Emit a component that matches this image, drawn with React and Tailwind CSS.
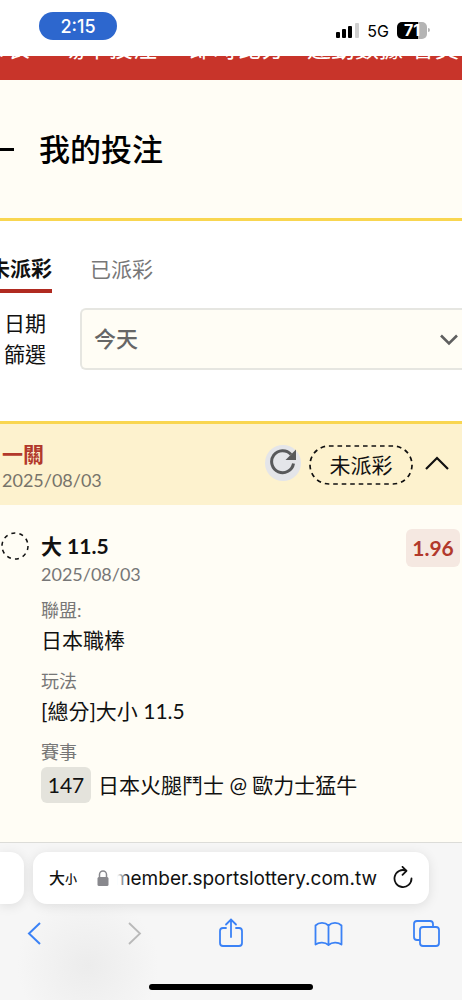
import React from 'react';

const navItems = [
  { label: '賽事表', className: '-ml-[42px]' },
  { label: '場中投注', className: 'ml-[31px]' },
  { label: '即時比分', className: 'ml-8' },
  { label: '運動數據', className: 'ml-[22px]' },
  { label: '會員', className: 'ml-2' },
];

const details = [
  { label: '聯盟:', value: '日本職棒' },
  { label: '玩法', value: '[總分]大小 11.5' },
];

const StatusBar = () => (
  <div className="flex h-14 items-start justify-between bg-white pt-3 pr-8 pl-[39px] font-['Inter','Liberation_Sans',sans-serif]">
    <div className="flex h-7 w-[78px] items-center justify-center rounded-full bg-[#2d67ce] pt-0.5 text-lg font-medium text-white">
      2:15
    </div>
    <div className="flex h-9 items-center gap-2">
      <svg className="h-4 w-6" viewBox="0 0 24 16" aria-hidden="true">
        <rect x="1" y="10" width="4" height="6" rx="1" />
        <rect x="7" y="7" width="4" height="9" rx="1" />
        <rect x="13" y="4" width="4" height="12" rx="1" />
        <rect x="20" y="1" width="4" height="15" rx="1" fill="#cfcfcf" />
      </svg>
      <span className="pt-0.5 text-base text-black">5G</span>
      <div className="flex items-center">
        <span className="flex h-[17px] w-[30px] items-center justify-center rounded-[5px] bg-linear-to-r from-black from-70% to-[#b4b4b4] to-70% text-base leading-4 font-bold text-white">
          71
        </span>
        <span className="ml-px h-1 w-0.5 rounded-r bg-[#b4b4b4]" />
      </div>
    </div>
  </div>
);

const SiteNav = () => (
  <nav className="flex h-6 items-end overflow-hidden bg-[#c8342a] pb-5 text-2xl leading-6 whitespace-nowrap text-white">
    {navItems.map((item) => (
      <a key={item.label} href="#" className={`shrink-0 ${item.className}`}>
        {item.label}
      </a>
    ))}
  </nav>
);

const Filters = () => (
  <section className="h-[200px] bg-white pt-6">
    <div className="flex items-start text-[21px]" role="tablist">
      <button role="tab" aria-selected="true" className="-ml-[11px] h-12 shrink-0 border-b-4 border-[#b02a20] pt-0.5 leading-[42px] font-bold">
        未派彩
      </button>
      <button role="tab" aria-selected="false" className="ml-[38px] h-12 shrink-0 pt-1 pb-1 leading-10 text-[#777]">
        已派彩
      </button>
    </div>
    <div className="mt-3.5 flex items-center">
      <label htmlFor="date-filter" className="w-20 shrink-0 pr-8 pb-0.5 pl-1 text-[21px] leading-[31px]">
        日期篩選
      </label>
      <div className="relative flex-1">
        <select
          id="date-filter"
          className="h-[62px] w-full appearance-none rounded-l-md border-2 border-r-0 border-[#e6e6e1] bg-[#fffdf5] px-3 pb-0.5 text-[22px] font-medium text-[#666]"
        >
          <option>今天</option>
        </select>
        <svg className="pointer-events-none absolute top-6 right-1 h-4 w-[18px]" viewBox="0 0 18 16" fill="none" stroke="#5f5f5f" strokeWidth="2.6" aria-hidden="true">
          <path d="M1 3.5 9 11.5 17 3.5" />
        </svg>
      </div>
    </div>
  </section>
);

const BetHeader = () => (
  <header className="flex h-[84px] items-center justify-between border-t-[3px] border-[#f9d650] bg-[#fdf2ce] pr-[13px] pl-0.5">
    <div className="pt-0.5">
      <h2 className="text-[21px] leading-7 font-bold text-[#b2392b]">一關</h2>
      <p className="text-lg leading-6 text-[#77746a]">2025/08/03</p>
    </div>
    <div className="flex items-center gap-2">
      <button aria-label="重新整理" className="mb-1 flex size-9 items-center justify-center rounded-full bg-[#e4e5e9]">
        <svg className="-mt-1 size-7" viewBox="0 0 28 28" fill="none" aria-hidden="true">
          <path d="M24.500 16.500A11 11 0 1 1 22 7.500" stroke="#58595b" strokeWidth="3" />
          <path d="M27 2.500V13H16.500Z" fill="#58595b" />
        </svg>
      </button>
      <span className="relative flex h-10 w-[104px] items-center justify-center text-[21px]">
        <svg className="absolute inset-0 size-full" viewBox="0 0 104 40" fill="none" aria-hidden="true">
          <rect x="1" y="1" width="102" height="38" rx="19" stroke="#111" strokeWidth="1.700" strokeDasharray="4.600 3.900" />
        </svg>
        未派彩
      </span>
      <button aria-label="收合" className="mb-1 ml-1">
        <svg className="h-4 w-6" viewBox="0 0 24 16" fill="none" stroke="#111" strokeWidth="2.200" aria-hidden="true">
          <path d="M1 14 12 3 23 14" />
        </svg>
      </button>
    </div>
  </header>
);

const BetBody = () => (
  <div className="flex items-start pt-6 pr-0.5 pl-px">
    <svg className="mt-[3px] size-[30px] shrink-0" viewBox="0 0 30 30" aria-hidden="true">
      <circle cx="14" cy="14" r="13" fill="none" stroke="#111" strokeWidth="1.500" strokeDasharray="4 4.168" />
    </svg>
    <div className="ml-2.5 flex-1">
      <h3 className="text-[21px] leading-[34px] font-bold">大 11.5</h3>
      <p className="text-lg leading-[22px] text-[#777]">2025/08/03</p>
      {details.map((item) => (
        <div key={item.label} className="mt-3 text-[21px] leading-[33px]">
          <p className="text-lg leading-[26px] text-[#777]">{item.label}</p>
          <p>{item.value}</p>
        </div>
      ))}
      <p className="mt-3 text-lg leading-[26px] text-[#777]">賽事</p>
      <div className="mt-0.5 flex items-center gap-[7px] text-[21px]">
        <span className="flex h-9 w-[50px] items-center justify-center rounded-md bg-[#e4e3dc]">147</span>
        <span>日本火腿鬥士 @ 歐力士猛牛</span>
      </div>
    </div>
    <span className="flex h-[38px] w-[54px] items-center justify-center rounded-md bg-[#f5e8e1] text-[21px] font-bold text-[#b2392b]">
      1.96
    </span>
  </div>
);

const BrowserBar = () => (
  <footer className="border-t border-[#dcdcd8] bg-[#f6f6f6] bg-[radial-gradient(circle_at_19%_78%,#ececec_0,#f6f6f6_18%)] pt-[9px] pb-2.5 font-['Inter','Noto_Sans_CJK_TC',sans-serif]">
    <div className="flex overflow-x-clip">
      <div className="h-[52px] w-6 shrink-0 rounded-r-[14px] bg-white shadow-[0_2px_12px_#0000001a]" />
      <div className="mr-[33px] ml-[9px] flex h-[52px] min-w-0 flex-1 items-center rounded-[14px] bg-white px-4 shadow-[0_2px_12px_#0000001a]">
        <button aria-label="頁面設定" className="flex shrink-0 items-baseline font-medium">
          <span className="text-base">大</span>
          <span className="text-xs">小</span>
        </button>
        <svg className="ml-5 h-4 w-3 shrink-0" viewBox="0 0 12 16" aria-hidden="true">
          <rect x="0.500" y="7" width="11" height="9" rx="1.500" fill="#88888d" />
          <path d="M2.500 8V4.500a3.500 3.500 0 0 1 7 0V8" fill="none" stroke="#88888d" strokeWidth="1.500" />
        </svg>
        <div className="relative ml-2 flex min-w-0 flex-1 justify-end overflow-hidden pt-0.5 text-[19px] whitespace-nowrap text-[#111]">
          member.sportslottery.com.tw
          <span className="absolute inset-y-0 left-0 w-3 bg-linear-to-r from-white to-transparent" />
        </div>
        <button aria-label="重新載入" className="ml-4 shrink-0">
          <svg className="h-6 w-5" viewBox="0 0 20 24" fill="none" stroke="#111" strokeWidth="1.800" strokeLinecap="round" strokeLinejoin="round" aria-hidden="true">
            <path d="M18.500 12.500A8.500 8.500 0 1 1 13 4.600" />
            <path d="M9.500 0.800 13.500 4.800 9.500 8.800" />
          </svg>
        </button>
      </div>
    </div>
    <div className="mt-3 flex items-center justify-between pr-[18px] pl-5 text-[#3b82f6]">
      <button aria-label="上一頁">
        <svg className="size-9" viewBox="0 0 36 36" fill="none" stroke="currentColor" strokeWidth="2" aria-hidden="true">
          <path d="M20 7 9 17.500 20 28" />
        </svg>
      </button>
      <button aria-label="下一頁" className="text-[#b9b9b9]">
        <svg className="size-9" viewBox="0 0 36 36" fill="none" stroke="currentColor" strokeWidth="1.800" aria-hidden="true">
          <path d="M12 7 23 17.500 12 28" />
        </svg>
      </button>
      <button aria-label="分享">
        <svg className="size-9" viewBox="0 0 36 36" fill="none" stroke="currentColor" strokeWidth="1.800" strokeLinecap="round" aria-hidden="true">
          <path d="M12 12H9a3 3 0 0 0-3 3V27a3 3 0 0 0 3 3H25a3 3 0 0 0 3-3V15a3 3 0 0 0-3-3H22M17 21V4M12 8.500 17 3.500 22 8.500" />
        </svg>
      </button>
      <button aria-label="書籤">
        <svg className="size-9" viewBox="0 0 36 36" fill="none" stroke="currentColor" strokeWidth="1.800" strokeLinejoin="round" aria-hidden="true">
          <path d="M17.500 29C14 26 8 26 4.500 28.500V9.500C8 6 14 6 17.500 9.500 21 6 27 6 30.500 9.500V28.500C27 26 21 26 17.500 29ZM17.500 9.500V29" />
        </svg>
      </button>
      <button aria-label="分頁">
        <svg className="size-9" viewBox="0 0 36 36" fill="none" stroke="currentColor" strokeWidth="1.800" aria-hidden="true">
          <path d="M12 24H9a3 3 0 0 1-3-3V8a3 3 0 0 1 3-3H22a3 3 0 0 1 3 3V11" />
          <rect x="12" y="11" width="19" height="19" rx="3" />
        </svg>
      </button>
    </div>
    <div className="mx-auto mt-8 h-1.5 w-[164px] rounded-full bg-black" />
  </footer>
);

const App = () => (
  <div lang="zh-TW" className="flex min-h-screen flex-col overflow-x-clip bg-[#fffdf5] font-['Lato','Noto_Sans_CJK_TC',sans-serif] text-[#111]">
    <StatusBar />
    <SiteNav />
    <main className="flex-1">
      <div className="flex h-[141px] items-center gap-[25px] border-b-[3px] border-[#f9d650]">
        <span className="h-[3px] w-3.5 bg-black" />
        <h1 className="text-[31px] font-medium text-black">我的投注</h1>
      </div>
      <Filters />
      <article>
        <BetHeader />
        <BetBody />
      </article>
    </main>
    <BrowserBar />
  </div>
);

export default App;
